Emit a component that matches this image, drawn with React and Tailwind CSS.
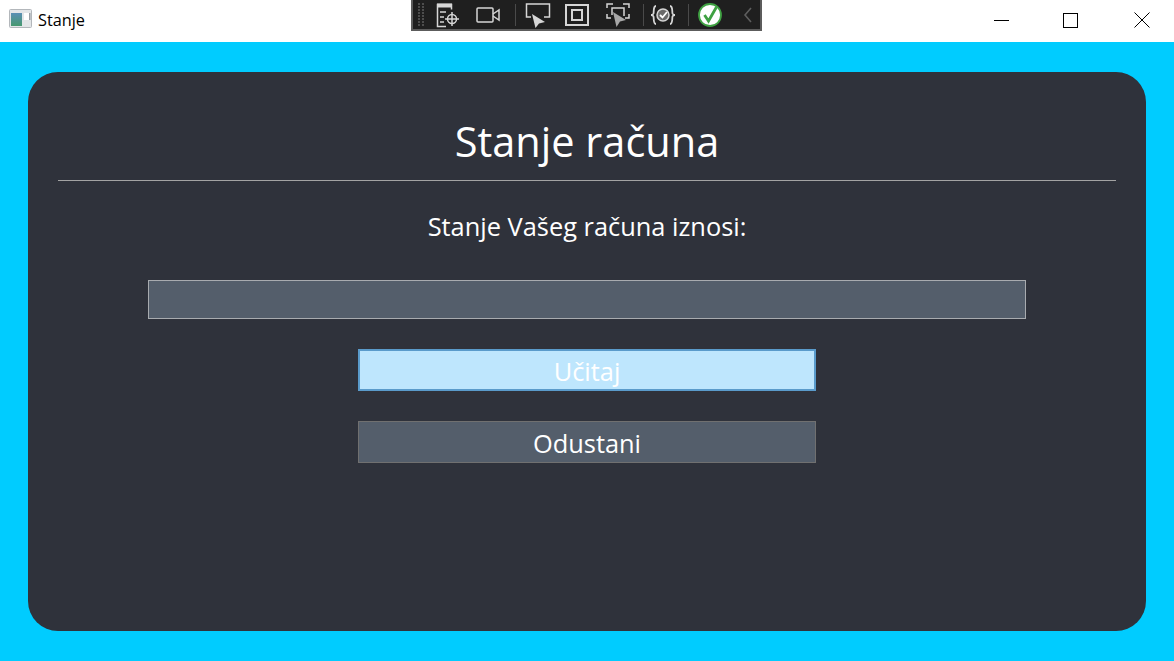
import React from 'react';

const font = { fontFamily: '"Open Sans", "Noto Sans", sans-serif' };

function Divider() {
  return <div className="w-px h-[22px] bg-[#4a4a4a] mx-[5px]" />;
}

function DebugToolbar() {
  return (
    <div className="absolute left-[411px] top-0 w-[351px] h-[31px] bg-[#1f1f1f] border-2 border-t-0 border-[#5c5c5c] flex items-center">
      <svg width="10" height="26" viewBox="0 0 10 26" className="ml-[4px] mr-[8px]" fill="#4d4d4d">
        {[1, 4, 7, 10, 13, 16, 19, 22].map((y) => (
          <g key={y}>
            <rect x="1" y={y} width="2" height="2" />
            <rect x="5" y={y} width="2" height="2" />
          </g>
        ))}
      </svg>
      <svg width="26" height="26" viewBox="0 0 26 26" fill="none" stroke="#d6d6d6" strokeWidth="1.5" className="mr-[14px]">
        <path d="M11 24.500H2.500V2.500h14v5" />
        <rect x="2" y="1.500" width="15" height="4" fill="#d6d6d6" stroke="none" />
        <path d="M5 10h6M5 15h4M5 20h4" />
        <circle cx="17" cy="17" r="4.500" />
        <path d="M17 10v14M10 17h14" />
      </svg>
      <svg width="26" height="20" viewBox="0 0 26 20" fill="none" stroke="#d6d6d6" strokeWidth="1.500" className="mr-[9px]">
        <rect x="2" y="3" width="16" height="14" rx="1" />
        <path d="M18 9l6-4v10l-6-4" />
      </svg>
      <Divider />
      <svg width="28" height="26" viewBox="0 0 28 26" fill="none" className="ml-[3px] mr-[12px]">
        <path d="M7 15H2.500V2h23v13H20" stroke="#d6d6d6" strokeWidth="1.500" />
        <path d="M8 12l13 8-6 1.500-3.500 4.500z" fill="#d6d6d6" />
      </svg>
      <svg width="26" height="24" viewBox="0 0 26 24" fill="none" stroke="#d6d6d6" strokeWidth="2" className="mr-[15px]">
        <rect x="2" y="2" width="22" height="20" />
        <rect x="8" y="7" width="10" height="10" />
      </svg>
      <svg width="26" height="26" viewBox="0 0 26 26" fill="none" className="mr-[7px]">
        <path d="M2 6V2h6M18 2h6v4M2 12v4h4M24 12v4h-4M7 13V6h12v8" stroke="#d6d6d6" strokeWidth="1.500" />
        <path d="M8 10l13 8-6 1.500-3.500 5.500z" fill="#a8a8a8" />
      </svg>
      <Divider />
      <svg width="26" height="24" viewBox="0 0 26 24" fill="none" stroke="#d6d6d6" strokeWidth="1.800" className="ml-[1px] mr-[7px]">
        <path d="M6 3C3 3 4 9 3.500 10.500 3 12 1 12 1 12s2 0 2.500 1.500C4 15 3 21 6 21M20 3c3 0 2 6 2.500 7.500S25 12 25 12s-2 0-2.500 1.500S23 21 20 21" />
        <circle cx="13" cy="12" r="6" fill="#6a6a6a" strokeWidth="1.500" />
        <path d="M10 12l2.500 2.500L17 9" stroke="#fff" />
      </svg>
      <Divider />
      <svg width="26" height="26" viewBox="0 0 26 26" fill="none" className="ml-[3px]">
        <circle cx="13" cy="13" r="11" fill="#fff" stroke="#3fa142" strokeWidth="1.800" />
        <path d="M7.500 13l4 6L19.500 5" stroke="#3fa142" strokeWidth="2.800" />
      </svg>
      <svg width="12" height="18" viewBox="0 0 12 18" fill="none" stroke="#5e5e5e" strokeWidth="1.600" className="ml-[19px]">
        <path d="M9 2L3 9l6 7" />
      </svg>
    </div>
  );
}

function TitleBar() {
  return (
    <div className="h-[42px] bg-white flex items-center shrink-0">
      <svg width="23" height="19" viewBox="0 0 23 19" className="ml-[9px] mb-[5px]">
        <defs>
          <linearGradient id="appIcon" x1="0" y1="0" x2="0" y2="1">
            <stop offset="0" stopColor="#5a8fb5" />
            <stop offset="1" stopColor="#46996f" />
          </linearGradient>
        </defs>
        <rect x="0.500" y="0.500" width="22" height="18" rx="1" fill="#e3e6e8" stroke="#b3b7bb" />
        <rect x="2" y="4" width="11" height="13" fill="url(#appIcon)" />
        <rect x="15" y="4" width="5" height="7" fill="#fff" />
        <rect x="20" y="4" width="1.500" height="7" fill="#9aa0a5" />
      </svg>
      <span className="ml-[6px] mb-[1px] text-[16.300px] text-black">Stanje</span>
      <div className="ml-auto flex items-center mb-[2px]">
        <div className="w-[61px] flex justify-center">
          <div className="w-[15px] h-px bg-black" />
        </div>
        <div className="w-[77px] flex justify-center">
          <div className="w-[15px] h-[15px] border border-black" />
        </div>
        <div className="w-[65px] flex justify-center">
          <svg width="16" height="16" viewBox="0 0 16 16" stroke="#000" fill="none">
            <path d="M0.500 0.500l15 15M15.500 0.500l-15 15" />
          </svg>
        </div>
      </div>
    </div>
  );
}

export default function App() {
  return (
    <div className="relative w-[1174px] h-[661px] overflow-hidden flex flex-col bg-[#00ccff]" style={font}>
      <TitleBar />
      <DebugToolbar />
      <div className="flex-1 pt-[30px] pb-[30px] px-[28px]">
        <div className="h-full rounded-[30px] bg-[#2f323b] px-[30px] flex flex-col items-center text-white">
          <h1 className="h-[109px] w-full flex items-center justify-center border-b border-[#a3a3a3] text-[41.500px] font-normal leading-none pt-[34px] pb-[2px]">
            Stanje računa
          </h1>
          <p className="mt-[26px] h-[38px] text-[25.400px] leading-[38px] w-full text-center">Stanje Vašeg računa iznosi:</p>
          <div className="mt-[35px] w-[878px] h-[39px] bg-[#545e6b] border border-[#a8abaf]" />
          <button className="mt-[30px] w-[458px] h-[42px] bg-[#bee6fd] border-2 border-[#5a9bcb] text-white text-[25.400px] leading-none pt-[3px]">
            Učitaj
          </button>
          <button className="mt-[30px] w-[458px] h-[42px] bg-[#545e6b] border border-[#707070] text-white text-[25.400px] leading-none pt-[3px]">
            Odustani
          </button>
        </div>
      </div>
    </div>
  );
}
